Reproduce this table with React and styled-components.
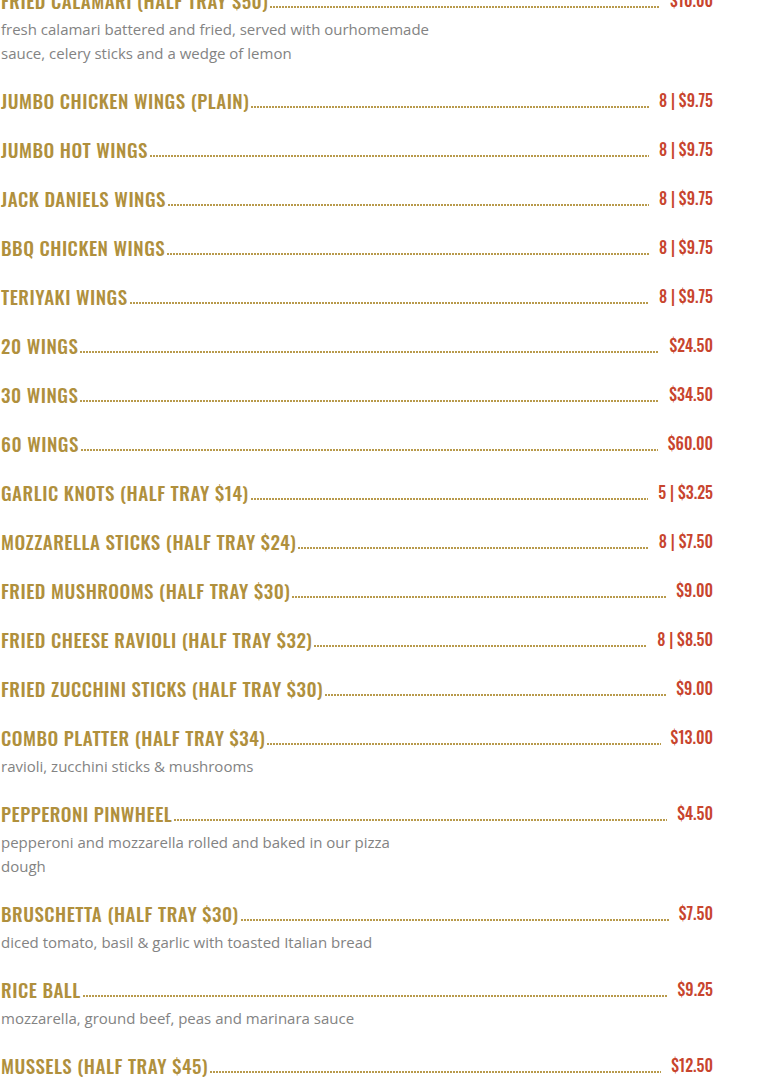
import React from "react";
import styled, { createGlobalStyle } from "styled-components";

const GlobalStyle = createGlobalStyle`
  html, body {
    margin: 0;
    padding: 0;
    background: #ffffff;
  }
`;

const Menu = styled.div`
  width: 712px;
  margin-top: -15px;
  padding-left: 1px;
`;

const Item = styled.div`
  padding-bottom: 19px;
`;

const TitleRow = styled.div`
  display: flex;
  align-items: flex-end;
  height: 30px;
`;

const Title = styled.h3`
  margin: 0;
  font-family: "Oswald", "Roboto Condensed", "Liberation Sans Narrow", "DejaVu Sans Condensed", sans-serif;
  font-weight: 500;
  font-size: 19px;
  line-height: 30px;
  letter-spacing: 0.5px;
  color: #b0903d;
  text-transform: uppercase;
  white-space: nowrap;
`;

const Leader = styled.span`
  flex: 1;
  height: 2px;
  margin: 0 10px 7px 2px;
  background-image: linear-gradient(to right, #b89a4c 0 2px, transparent 2px);
  background-size: 3px 2px;
  background-repeat: repeat-x;
`;

const Price = styled.span`
  font-family: "Oswald", "Roboto Condensed", "Liberation Sans Narrow", "DejaVu Sans Condensed", sans-serif;
  font-weight: 500;
  font-size: 16px;
  line-height: 30px;
  letter-spacing: 0;
  color: #c8452e;
  white-space: nowrap;
`;

const Desc = styled.p`
  margin: 2px 0 1px;
  max-width: 431px;
  font-family: "Open Sans", sans-serif;
  font-size: 15px;
  line-height: 24px;
  color: #838383;
`;

const items = [
  { name: "Fried Calamari (Half Tray $50)", price: "$10.00", desc: "fresh calamari battered and fried, served with ourhomemade sauce, celery sticks and a wedge of lemon" },
  { name: "Jumbo Chicken Wings (Plain)", price: "8 | $9.75" },
  { name: "Jumbo Hot Wings", price: "8 | $9.75" },
  { name: "Jack Daniels Wings", price: "8 | $9.75" },
  { name: "BBQ Chicken Wings", price: "8 | $9.75" },
  { name: "Teriyaki Wings", price: "8 | $9.75" },
  { name: "20 Wings", price: "$24.50" },
  { name: "30 Wings", price: "$34.50" },
  { name: "60 Wings", price: "$60.00" },
  { name: "Garlic Knots (Half Tray $14)", price: "5 | $3.25" },
  { name: "Mozzarella Sticks (Half Tray $24)", price: "8 | $7.50" },
  { name: "Fried Mushrooms (Half Tray $30)", price: "$9.00" },
  { name: "Fried Cheese Ravioli (Half Tray $32)", price: "8 | $8.50" },
  { name: "Fried Zucchini Sticks (Half Tray $30)", price: "$9.00" },
  { name: "Combo Platter (Half Tray $34)", price: "$13.00", desc: "ravioli, zucchini sticks & mushrooms" },
  { name: "Pepperoni Pinwheel", price: "$4.50", desc: "pepperoni and mozzarella rolled and baked in our pizza dough" },
  { name: "Bruschetta (Half Tray $30)", price: "$7.50", desc: "diced tomato, basil & garlic with toasted Italian bread" },
  { name: "Rice Ball", price: "$9.25", desc: "mozzarella, ground beef, peas and marinara sauce" },
  { name: "Mussels (Half Tray $45)", price: "$12.50" },
];

export default function App() {
  return (
    <>
      <GlobalStyle />
      <Menu>
        {items.map((item) => (
          <Item key={item.name}>
            <TitleRow>
              <Title>{item.name}</Title>
              <Leader />
              <Price>{item.price}</Price>
            </TitleRow>
            {item.desc && <Desc>{item.desc}</Desc>}
          </Item>
        ))}
      </Menu>
    </>
  );
}
